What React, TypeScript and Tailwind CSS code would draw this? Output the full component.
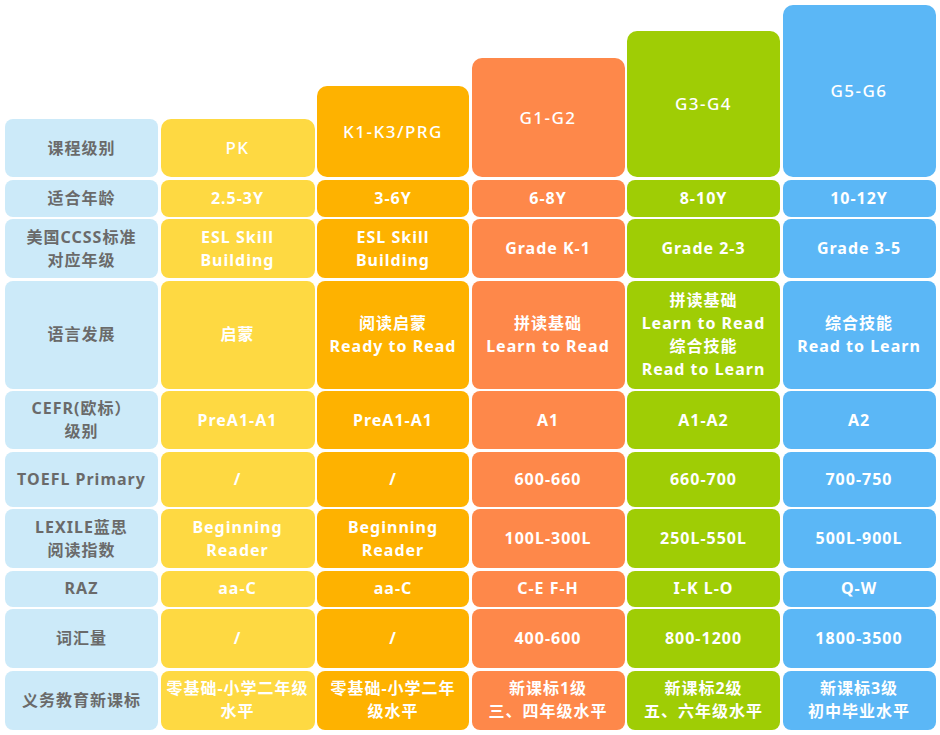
const cols = [
  { name: 'PK', h: 'h-[58px]', bg: 'bg-[#fed942]' },
  { name: 'K1-K3/PRG', h: 'h-[91px]', bg: 'bg-[#feb200]' },
  { name: 'G1-G2', h: 'h-[119px]', bg: 'bg-[#fe884a]' },
  { name: 'G3-G4', h: 'h-[146px]', bg: 'bg-[#9fcd05]' },
  { name: 'G5-G6', h: 'h-[172px]', bg: 'bg-[#5bb7f6]' },
]

const rows: { label: string[]; cells: string[][] }[] = [
  { label: ['适合年龄'], cells: [['2.5-3Y'], ['3-6Y'], ['6-8Y'], ['8-10Y'], ['10-12Y']] },
  {
    label: ['美国CCSS标准', '对应年级'],
    cells: [['ESL Skill', 'Building'], ['ESL Skill', 'Building'], ['Grade K-1'], ['Grade 2-3'], ['Grade 3-5']],
  },
  {
    label: ['语言发展'],
    cells: [
      ['启蒙'],
      ['阅读启蒙', 'Ready to Read'],
      ['拼读基础', 'Learn to Read'],
      ['拼读基础', 'Learn to Read', '综合技能', 'Read to Learn'],
      ['综合技能', 'Read to Learn'],
    ],
  },
  { label: ['CEFR(欧标）', '级别'], cells: [['PreA1-A1'], ['PreA1-A1'], ['A1'], ['A1-A2'], ['A2']] },
  { label: ['TOEFL Primary'], cells: [['/'], ['/'], ['600-660'], ['660-700'], ['700-750']] },
  {
    label: ['LEXILE蓝思', '阅读指数'],
    cells: [['Beginning', 'Reader'], ['Beginning', 'Reader'], ['100L-300L'], ['250L-550L'], ['500L-900L']],
  },
  { label: ['RAZ'], cells: [['aa-C'], ['aa-C'], ['C-E F-H'], ['I-K L-O'], ['Q-W']] },
  { label: ['词汇量'], cells: [['/'], ['/'], ['400-600'], ['800-1200'], ['1800-3500']] },
  {
    label: ['义务教育新课标'],
    cells: [
      ['零基础-小学二年级', '水平'],
      ['零基础-小学二年', '级水平'],
      ['新课标1级', '三、四年级水平'],
      ['新课标2级', '五、六年级水平'],
      ['新课标3级', '初中毕业水平'],
    ],
  },
]

const font = { fontFamily: '"Noto Sans", "Noto Sans CJK SC", sans-serif' }

function Cell({ lines, bg, text }: { lines: string[]; bg: string; text: string }) {
  return (
    <div className={`${bg} ${text} rounded-[8px] flex flex-col items-center justify-center text-center text-[16px] leading-[23px] font-bold tracking-[1px]`}>
      {lines.map((l, i) => (
        <div key={i} className="whitespace-nowrap">{l}</div>
      ))}
    </div>
  )
}

export default function App() {
  return (
    <div className="w-[940px] h-[735px] bg-white pt-[5px] pl-[5px]" style={font}>
      <div className="grid grid-cols-[153px_154px_152px_153px_153px_153px] grid-rows-[172px_37px_59px_108px_58px_55px_59px_36px_59px_59px] gap-[2.5px] w-[930px]">
        <div className="self-end h-[58px] bg-[#cceaf9] rounded-[8px] flex items-center justify-center text-[#6a6a6a] text-[16px] font-bold tracking-[1px]">
          课程级别
        </div>
        {cols.map((c) => (
          <div key={c.name} className={`self-end ${c.h} ${c.bg} rounded-[10px] flex items-center justify-center text-white text-[17px] font-medium tracking-[1.5px]`}>
            {c.name}
          </div>
        ))}
        {rows.map((r, ri) => (
          <div key={ri} className="contents">
            <Cell lines={r.label} bg="bg-[#cceaf9]" text="text-[#6a6a6a]" />
            {r.cells.map((lines, ci) => (
              <Cell key={ci} lines={lines} bg={cols[ci].bg} text="text-white" />
            ))}
          </div>
        ))}
      </div>
    </div>
  )
}
